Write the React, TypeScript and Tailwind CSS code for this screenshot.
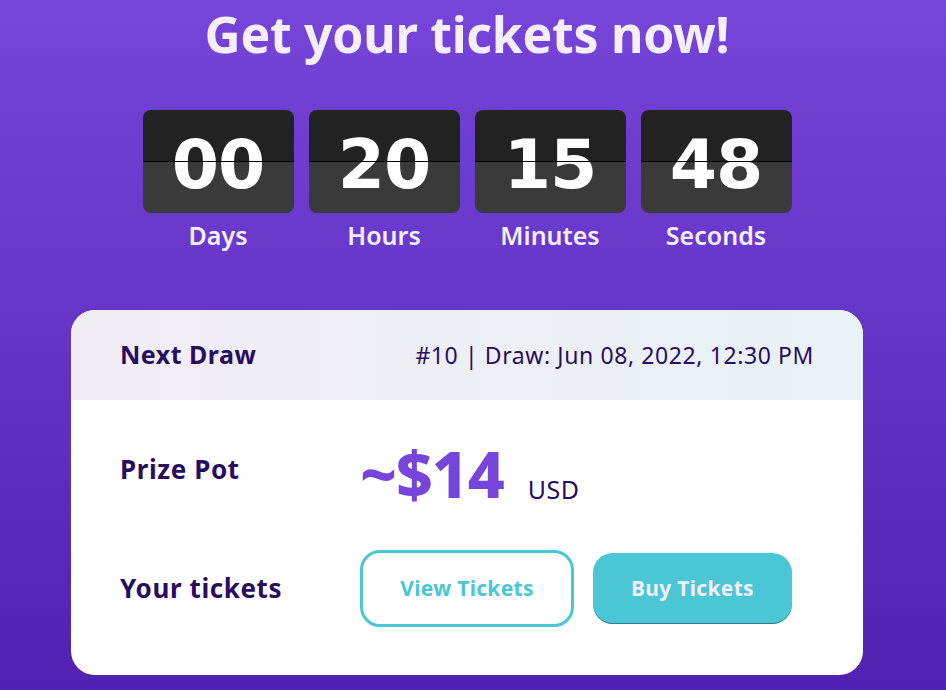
const font = { fontFamily: '"Noto Sans", "Open Sans", sans-serif' };
const digitFont = { fontFamily: '"DejaVu Sans", "Noto Sans", sans-serif' };

const units = [
  { value: "00", label: "Days" },
  { value: "20", label: "Hours" },
  { value: "15", label: "Minutes" },
  { value: "48", label: "Seconds" },
];

function FlipCard({ value, label }: { value: string; label: string }) {
  return (
    <div className="flex flex-col items-center">
      <div className="relative w-[151px] h-[103px] rounded-lg overflow-hidden flex flex-col">
        <div className="h-1/2 bg-[#222222]" />
        <div className="h-1/2 bg-[#3a3a3a]" />
        <div
          className="absolute inset-0 flex items-center justify-center text-white text-[68px] font-bold leading-none tracking-[-1px] pt-[6px]"
          style={digitFont}
        >
          {value}
        </div>
        <div className="absolute left-0 right-0 top-[51px] h-px bg-black" />
      </div>
      <div className="mt-[10px] text-[25px] font-semibold text-[#f4eeff] leading-none">{label}</div>
    </div>
  );
}

export default function App() {
  return (
    <div
      className="w-[946px] h-[690px] overflow-hidden bg-gradient-to-b from-[#7645d9] to-[#5121b1] flex flex-col items-center pr-[12px]"
      style={font}
    >
      <h1 className="mt-[2px] text-[50px] font-bold text-[#f4eeff] leading-[64px] tracking-[-0.3px]">
        Get your tickets now!
      </h1>
      <div className="mt-[44px] flex gap-[15px]">
        {units.map((u) => (
          <FlipCard key={u.label} {...u} />
        ))}
      </div>
      <div className="mt-[62px] w-[792px] rounded-[24px] bg-white overflow-hidden">
        <div className="h-[90px] px-[49px] flex items-center justify-between bg-gradient-to-r from-[#f2edf5] to-[#e9f2f6]">
          <span className="text-[25px] font-bold text-[#280d5f] tracking-[0.5px]">Next Draw</span>
          <span className="text-[23px] text-[#280d5f] tracking-[0.6px]">#10 | Draw: Jun 08, 2022, 12:30 PM</span>
        </div>
        <div className="px-[49px] pt-[42px] pb-[48px] grid grid-cols-[240px_1fr] gap-y-[44px] items-center">
          <span className="text-[26px] font-bold text-[#280d5f] self-start mt-[8px] tracking-[0.6px]">Prize Pot</span>
          <div className="flex items-end gap-[24px]">
            <span className="text-[64px] font-extrabold text-[#7645d9] leading-[64px] tracking-[-1px]">~$14</span>
            <span className="text-[25px] text-[#280d5f] mb-[-2px] tracking-[0.5px]">USD</span>
          </div>
          <span className="text-[26px] font-bold text-[#280d5f] tracking-[0.6px]">Your tickets</span>
          <div className="flex items-center gap-[19px]">
            <button className="w-[214px] h-[77px] rounded-[20px] border-[3px] border-[#4ac6d4] bg-white text-[#4ac6d4] text-[21px] font-bold tracking-[0.3px]">
              View Tickets
            </button>
            <button className="w-[199px] h-[71px] rounded-[20px] bg-[#4ac6d4] text-[#f4eeff] text-[21px] font-bold tracking-[0.3px] shadow-[0_-1px_0_0_rgba(14,14,44,0.4)_inset]">
              Buy Tickets
            </button>
          </div>
        </div>
      </div>
    </div>
  );
}
